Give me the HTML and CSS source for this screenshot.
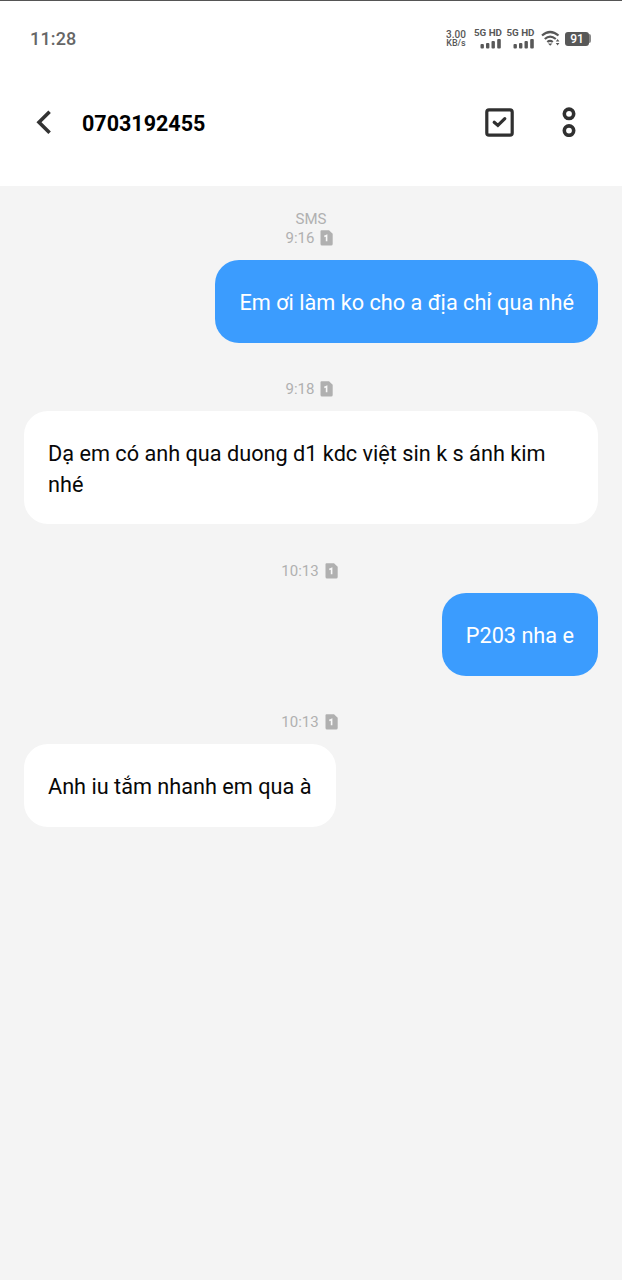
FILE: index.html
```html
<!DOCTYPE html>
<html lang="vi">
<head>
<meta charset="utf-8">
<title>0703192455</title>
<link rel="stylesheet" href="styles.css">
</head>
<body>
<svg width="0" height="0" class="defs" aria-hidden="true">
  <symbol id="signal" viewBox="0 0 22 10">
    <rect x="0.5" y="5" width="3.4" height="4.6" rx="1"/>
    <rect x="6" y="4" width="3.4" height="5.6" rx="1"/>
    <rect x="11.5" y="2" width="3.4" height="7.6" rx="1"/>
    <rect x="17.2" y="0" width="3.6" height="9.6" rx="1"/>
  </symbol>
  <symbol id="sim" viewBox="0 0 13 16">
    <path d="M1.5 0.3H9L12.7 3.8V14Q12.7 15.5 11.2 15.5H2Q0.5 15.5 0.5 14V1.5Q0.5 0.3 1.5 0.3Z" fill="#b0b0b0"/>
    <path d="M4.3 6.5L6.6 5.5V11.3" fill="none" stroke="#f8f8f8" stroke-width="1.6"/>
  </symbol>
</svg>
<header class="top">
  <div class="status">
    <span class="clock">11:28</span>
    <div class="indicators">
      <div class="speed"><span class="rate">3.00</span><span class="unit">KB/s</span></div>
      <div class="network"><span>5G HD</span><svg width="22" height="10"><use href="#signal"/></svg></div>
      <div class="network"><span>5G HD</span><svg width="22" height="10"><use href="#signal"/></svg></div>
      <svg class="wifi" width="20" height="17" viewBox="0 0 20 17">
        <g fill="none" stroke="#585858" stroke-width="2.2">
          <path d="M1 5.5Q9 -1.5 17.5 5.5"/>
          <path d="M3.8 9Q9 4.2 14.8 9"/>
          <path d="M6.3 12Q9 9.7 11.8 12"/>
        </g>
        <path d="M7 13.4H11.4L9.2 15.7ZM14.8 11.5L16.6 9L18.4 11.5ZM14.8 13L16.6 15.5L18.4 13Z" fill="#585858"/>
      </svg>
      <div class="battery"><span class="level">91</span></div>
    </div>
  </div>
  <div class="toolbar">
    <svg class="back" width="16" height="26" viewBox="0 0 16 26"><path d="M13.6 2.8L3 13.3L13.6 23.8" fill="none" stroke="#333" stroke-width="3.6"/></svg>
    <h1 class="number">0703192455</h1>
    <svg class="select" width="29" height="29" viewBox="0 0 29 29" fill="none" stroke="#303030">
      <rect x="1.8" y="1.8" width="25.4" height="25.4" rx="2.2" stroke-width="3.2"/>
      <path d="M9.2 14.2L12.9 17.4L19.8 10.7" stroke-width="3.2" stroke-linecap="round"/>
    </svg>
    <svg class="more" width="14" height="30" viewBox="0 0 14 30" fill="none" stroke="#303030" stroke-width="3.6">
      <circle cx="7" cy="6.8" r="4.7"/><circle cx="7" cy="23.6" r="4.7"/>
    </svg>
  </div>
</header>
<main class="thread">
  <div class="kind">SMS</div>
  <div class="stamp first"><span>9:16</span><svg width="13" height="16"><use href="#sim"/></svg></div>
  <p class="bubble sent">Em ơi làm ko cho a địa chỉ qua nhé</p>
  <div class="stamp"><span>9:18</span><svg width="13" height="16"><use href="#sim"/></svg></div>
  <p class="bubble received">Dạ em có anh qua duong d1 kdc việt sin k s ánh kim nhé</p>
  <div class="stamp"><span>10:13</span><svg width="13" height="16"><use href="#sim"/></svg></div>
  <p class="bubble sent">P203 nha e</p>
  <div class="stamp"><span>10:13</span><svg width="13" height="16"><use href="#sim"/></svg></div>
  <p class="bubble received">Anh iu tắm nhanh em qua à</p>
</main>
</body>
</html>
```
FILE: styles.css
```css
* { box-sizing: border-box; }
body {
  margin: 0;
  height: 1280px;
  display: flex;
  flex-direction: column;
  background: #f4f4f4;
  font-family: Roboto, "Noto Sans", sans-serif;
}
.defs { position: absolute; }
.top {
  height: 186px;
  flex: none;
  background: #fff;
  border-top: 1px solid #555;
}
.status {
  display: flex;
  justify-content: space-between;
  align-items: center;
  height: 75px;
  padding: 0 30px;
  color: #585858;
}
.clock { font-size: 18px; font-weight: 500; letter-spacing: 0.15px; color: #666; }
.indicators { display: flex; align-items: center; height: 24px; }
.speed {
  display: flex;
  flex-direction: column;
  align-items: center;
  width: 22px;
  margin-right: 6px;
  font-weight: 500;
  line-height: 9px;
}
.rate { font-size: 10px; }
.unit { font-size: 9px; }
.network {
  display: flex;
  flex-direction: column;
  align-items: flex-end;
  gap: 1px;
  width: 29px;
  margin-right: 3.5px;
  font-size: 9.8px;
  font-weight: 700;
  line-height: 10px;
  white-space: nowrap;
  fill: #585858;
}
.wifi { margin: 0 4.5px 0 2.5px; }
.battery {
  display: flex;
  align-items: center;
  width: 27px;
}
.level {
  width: 24px;
  height: 14px;
  border-radius: 3px;
  background: #585858;
  color: #fff;
  font-size: 12px;
  font-weight: 500;
  line-height: 14px;
  text-align: center;
}
.battery::after {
  content: "";
  width: 2px;
  height: 9px;
  border-radius: 0 2px 2px 0;
  background: #888;
}
.toolbar {
  display: flex;
  align-items: center;
  height: 92px;
  padding: 0 46px 0 36px;
}
.number {
  flex: 1;
  margin: 2px 0 0 30px;
  font-size: 21.5px;
  font-weight: 700;
  color: #000;
}
.more { margin-left: 48px; }
.thread {
  display: flex;
  flex-direction: column;
  padding: 24px 24px 0;
}
.kind, .stamp { color: #b0b0b0; font-size: 15px; line-height: 18px; }
.kind { text-align: center; }
.stamp {
  display: flex;
  justify-content: center;
  align-items: center;
  gap: 6px;
  height: 68.6px;
  padding: 24.6px 3px 0 0;
}
.stamp.first { height: 32px; padding: 0 3px 12px 0; }
.bubble {
  max-width: 100%;
  margin: 0;
  padding: 28px 24px 24.6px;
  border-radius: 24px;
  font-size: 21.7px;
  line-height: 30.2px;
}
.sent { align-self: flex-end; background: #3b9cfe; color: #fff; }
.received { align-self: flex-start; background: #fff; color: #080808; }
```
